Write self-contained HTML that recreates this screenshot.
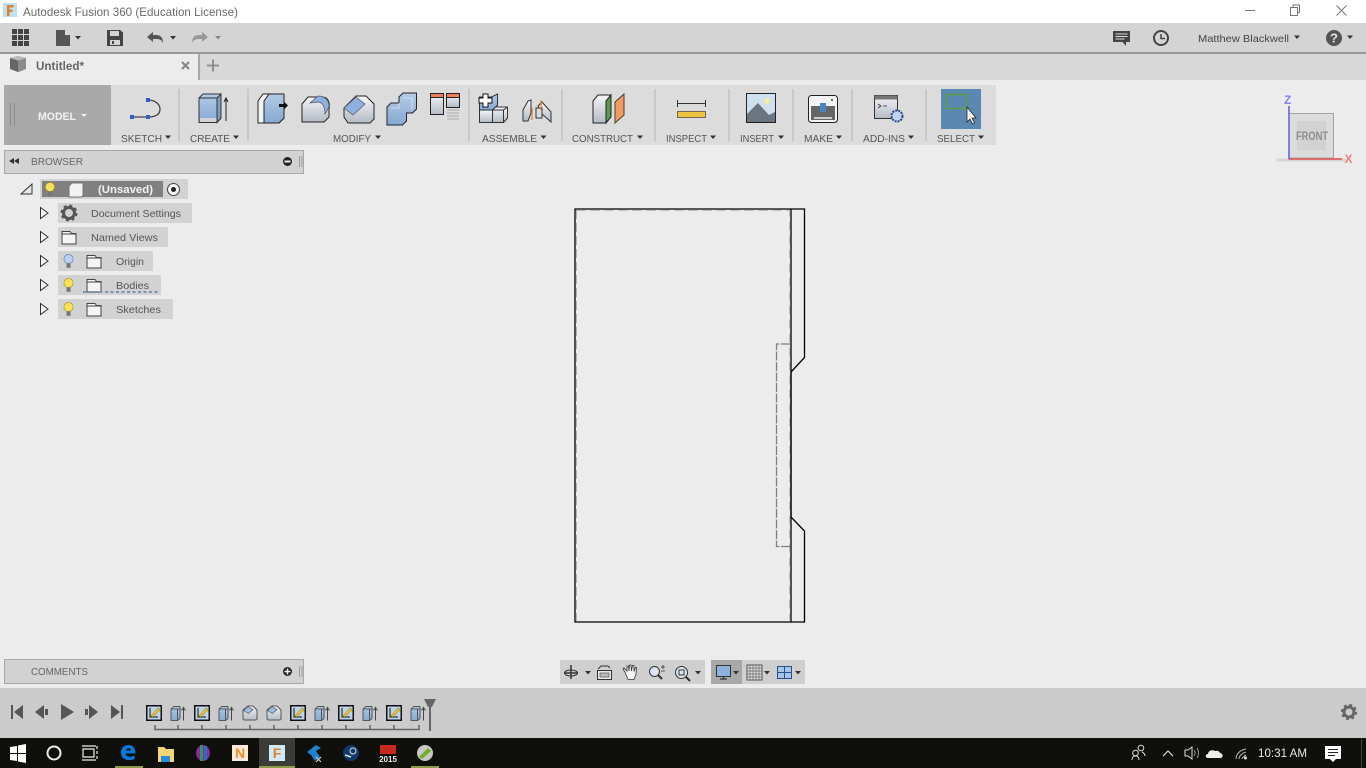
<!DOCTYPE html>
<html><head><meta charset="utf-8"><title>Autodesk Fusion 360</title>
<style>
html,body{margin:0;padding:0;background:#ececec;overflow:hidden}
svg{display:block}
text{font-family:"Liberation Sans",sans-serif}
.r{font-size:10.5px;fill:#555}
.b{font-size:10.5px;fill:#555}
</style></head><body>
<svg width="1366" height="768" viewBox="0 0 1366 768" xmlns="http://www.w3.org/2000/svg">
<defs>
<linearGradient id="blue" x1="0" y1="0" x2="0" y2="1"><stop offset="0" stop-color="#b4cbe6"/><stop offset="1" stop-color="#86a8d2"/></linearGradient>
<linearGradient id="gry" x1="0" y1="0" x2="0" y2="1"><stop offset="0" stop-color="#f4f5f7"/><stop offset="1" stop-color="#b4bbc6"/></linearGradient>
<g id="tri"><path d="M0 0h6l-3 3.500z" fill="#333"/></g>
<g id="tlS"><rect x="0.750" y="0.750" width="14.500" height="14.500" fill="#bcd3ea" stroke="#111" stroke-width="1.500"/><path d="M4 3v9h8" fill="none" stroke="#333" stroke-width="1.200"/><path d="M5 11l7-8 2 1.500-7 7.500z" fill="#f2c81e" stroke="#7a6410" stroke-width=".5"/></g>
<g id="tlE"><path d="M1.500 4l3-2.500h6v12l-2.500 2h-6.500z" fill="url(#blue)" stroke="#555" stroke-width="1"/><path d="M8 4h2.500M8 4v11.500M1.500 4h6.500" fill="none" stroke="#555"/><path d="M14 15.500V3M12 5.500l2-3 2 3" fill="none" stroke="#444" stroke-width="1"/></g>
<g id="tlC"><path d="M1 5l5-4h5l4 4v9l-1 1H2l-1-1z" fill="url(#gry)" stroke="#555" stroke-width="1"/><path d="M1.500 5.500l4.500-4 5 3-4.500 4z" fill="#9dbbe0" stroke="#555" stroke-width=".7"/></g>
<g id="bulb"><circle cx="0" cy="-2" r="4.600" fill="#f6e25a" stroke="#a88f20" stroke-width=".6"/><rect x="-2" y="2.300" width="4" height="4.500" fill="#777"/></g>
<g id="bulbB"><circle cx="0" cy="-2" r="4.600" fill="#bcd0f2" stroke="#6078a8" stroke-width=".6"/><rect x="-2" y="2.300" width="4" height="4.500" fill="#777"/></g>
<g id="fold"><path d="M.500 3V1h8l1.500 2h4.500v10.500H.500z" fill="#f4f4f4" stroke="#444" stroke-width="1"/><path d="M.500 3.500h14" stroke="#444"/></g>
<g id="exp"><path d="M.500 .500L8 6 .500 11.500z" fill="#f2f2f2" stroke="#333" stroke-width="1"/></g>
</defs>

<!-- base -->
<rect width="1366" height="768" fill="#ececec"/>
<rect width="1366" height="23" fill="#fff"/>
<rect y="23" width="1366" height="29" fill="#d4d4d4"/>
<rect y="52" width="1366" height="2.500" fill="#999"/>
<rect y="54" width="1366" height="26" fill="#d8d8d8"/>
<rect y="54" width="198" height="26" fill="#ececec"/>
<rect x="198" y="54" width="2" height="26" fill="#aaa"/>

<!-- title bar -->
<rect x="3" y="3" width="14" height="14" fill="#bfe0f2"/>
<path d="M7 5h6.500v2.500H9.500v2h3V12h-3v4H7z" fill="#e0822c"/>
<text x="23" y="16" font-size="12" fill="#6a6a6a" textLength="215" lengthAdjust="spacingAndGlyphs">Autodesk Fusion 360 (Education License)</text>
<rect x="1245" y="10" width="10" height="1" fill="#777"/>
<path d="M1290.500 7.500h7v8h-7zM1293 7V5h6.500v7.500h-2" fill="none" stroke="#777"/>
<path d="M1336.500 5.500l10 10M1346.500 5.500l-10 10" stroke="#777" stroke-width="1"/>

<!-- top toolbar -->
<g fill="#444"><rect x="12" y="29" width="5" height="5"/><rect x="18" y="29" width="5" height="5"/><rect x="24" y="29" width="5" height="5"/><rect x="12" y="35" width="5" height="5"/><rect x="18" y="35" width="5" height="5"/><rect x="24" y="35" width="5" height="5"/><rect x="12" y="41" width="5" height="5"/><rect x="18" y="41" width="5" height="5"/><rect x="24" y="41" width="5" height="5"/></g>
<path d="M56 30h9l5 5v11H56z" fill="#555"/><path d="M65 30v5h5z" fill="#ddd"/>
<use href="#tri" x="75" y="36"/>
<path d="M107 30h13l3 2.500V46h-16z" fill="#444"/><rect x="110" y="31" width="9" height="5" fill="#d4d4d4"/><rect x="110" y="40" width="10" height="5" fill="#d4d4d4"/><rect x="112" y="41" width="2" height="3" fill="#444"/>
<path d="M147 37l6-5v3h3c5 0 7 3 7 8-1.500-3-3-4-7-4h-3v3z" fill="#555"/>
<use href="#tri" x="170" y="36"/>
<path d="M208 37l-6-5v3h-3c-5 0-7 3-7 8 1.500-3 3-4 7-4h3v3z" fill="#999"/>
<path d="M215 36h6l-3 3.500z" fill="#888"/>

<path d="M1113 31h17v11h-4v4l-3.500-4H1113z" fill="#444"/><path d="M1115.500 34h12M1115.500 36.500h12M1115.500 39h9" stroke="#ddd" stroke-width="1"/>
<circle cx="1161" cy="38" r="7" fill="none" stroke="#444" stroke-width="2"/><path d="M1161 34v4.500h4" fill="none" stroke="#444" stroke-width="1.500"/>
<text x="1198" y="42" font-size="10.500" fill="#444" textLength="91" lengthAdjust="spacingAndGlyphs">Matthew Blackwell</text>
<use href="#tri" x="1294" y="35.500"/>
<circle cx="1334" cy="38" r="8" fill="#555"/><text x="1334" y="42.500" font-size="13" font-weight="bold" fill="#e4e4e4" text-anchor="middle">?</text>
<use href="#tri" x="1347" y="35.500"/>

<!-- tab -->
<path d="M10 58l8-2 8 2v11l-8 3-8-3z" fill="#666"/><path d="M18 60l8-2v11l-8 3z" fill="#8b8b8b"/><path d="M10 58l8-2 8 2-8 2.500z" fill="#bbb"/>
<text x="36" y="70" font-size="12" font-weight="bold" fill="#666" textLength="48" lengthAdjust="spacingAndGlyphs">Untitled*</text>
<path d="M182 62l7 7M189 62l-7 7" stroke="#888" stroke-width="2.200"/>
<path d="M213 59.500v12M207 65.500h12" stroke="#888" stroke-width="1.800"/>

<!-- ribbon -->
<rect x="4" y="85" width="992" height="60" fill="#dcdcdc"/>
<rect x="4" y="85" width="107" height="60" fill="#a9a9a9"/>
<path d="M10.500 103v23M14.500 103v23" stroke="#8d8d8d" stroke-width="1"/>
<text x="38" y="120" font-size="11" font-weight="bold" fill="#f2f2f2" textLength="38" lengthAdjust="spacingAndGlyphs">MODEL</text>
<path d="M81 114h6l-3 3z" fill="#eee"/>
<g fill="#c8c8c8"><rect x="178" y="89" width="2" height="52"/><rect x="247" y="89" width="2" height="52"/><rect x="468" y="89" width="2" height="52"/><rect x="561" y="89" width="2" height="52"/><rect x="654" y="89" width="2" height="52"/><rect x="728" y="89" width="2" height="52"/><rect x="792" y="89" width="2" height="52"/><rect x="851" y="89" width="2" height="52"/><rect x="925" y="89" width="2" height="52"/></g>

<text class="r" x="121" y="142" textLength="41" lengthAdjust="spacingAndGlyphs">SKETCH</text><use href="#tri" x="165" y="135.500"/>
<text class="r" x="190" y="142" textLength="40" lengthAdjust="spacingAndGlyphs">CREATE</text><use href="#tri" x="233" y="135.500"/>
<text class="r" x="333" y="142" textLength="38" lengthAdjust="spacingAndGlyphs">MODIFY</text><use href="#tri" x="375" y="135.500"/>
<text class="r" x="482" y="142" textLength="55" lengthAdjust="spacingAndGlyphs">ASSEMBLE</text><use href="#tri" x="540.500" y="135.500"/>
<text class="r" x="572" y="142" textLength="61" lengthAdjust="spacingAndGlyphs">CONSTRUCT</text><use href="#tri" x="637" y="135.500"/>
<text class="r" x="666" y="142" textLength="41" lengthAdjust="spacingAndGlyphs">INSPECT</text><use href="#tri" x="710" y="135.500"/>
<text class="r" x="740" y="142" textLength="34" lengthAdjust="spacingAndGlyphs">INSERT</text><use href="#tri" x="778" y="135.500"/>
<text class="r" x="804" y="142" textLength="29" lengthAdjust="spacingAndGlyphs">MAKE</text><use href="#tri" x="836" y="135.500"/>
<text class="r" x="863" y="142" textLength="42" lengthAdjust="spacingAndGlyphs">ADD-INS</text><use href="#tri" x="908" y="135.500"/>
<text class="r" x="937" y="142" textLength="38" lengthAdjust="spacingAndGlyphs">SELECT</text><use href="#tri" x="978" y="135.500"/>

<!-- sketch icon -->
<path d="M132 117h16c10 0 12-4 12-8s-4-9-12-9" fill="none" stroke="#444" stroke-width="1.300"/>
<rect x="130" y="115" width="4" height="4" fill="#2c62c4"/><rect x="146" y="115" width="4" height="4" fill="#2c62c4"/><rect x="146" y="98" width="4" height="4" fill="#2c62c4"/>
<!-- create -->
<path d="M199 98l4-4h18v24l-4 4.500h-18z" fill="url(#blue)" stroke="#333" stroke-width="1"/><path d="M217 98l4-4v24l-4 4.500z" fill="#7f9cc2" stroke="#333"/><path d="M199 98h18" fill="none" stroke="#333"/><rect x="200" y="118" width="16.500" height="4" fill="#d0d3d8"/><path d="M226 121V98M224 102l2-4 2 4" fill="none" stroke="#222" stroke-width="1"/>
<!-- press pull -->
<path d="M258 101l5-7h21v24l-5 5h-21z" fill="#f2f2f2" stroke="#222"/><path d="M264 101l5-7h15v24l-5 5h-15z" fill="url(#blue)" stroke="#222"/><path d="M279 104h5v-2.500l4 4-4 4V107h-5z" fill="#111"/>
<!-- fillet -->
<path d="M302 104l6-7h14c6 0 8 5 7 12v8l-5 5h-22z" fill="url(#gry)" stroke="#222"/><path d="M318 96c6 0 11 3 11 11l-4 7c0-8-3-12-7-12l-8 1z" fill="#8db0dc" stroke="#556" stroke-width=".7"/>
<!-- chamfer -->
<path d="M344 108l12-12h10l8 8v15l-4 4h-22l-4-6z" fill="url(#gry)" stroke="#222"/><path d="M344 108l12-11 9 7-12 11z" fill="#8db0dc" stroke="#556" stroke-width=".7"/>
<!-- combine -->
<path d="M387 107l4-4h8v-6l4-4h13.500v16l-4 4h-6v8l-4 4H387z" fill="url(#blue)" stroke="#223" stroke-width="1"/><path d="M391 108h8v-5M403 98h9v12" fill="none" stroke="#dfe8f4" stroke-width=".8"/>
<!-- replace face -->
<rect x="430.500" y="93.500" width="13" height="21" fill="url(#gry)" stroke="#222"/><rect x="430.500" y="93.500" width="13" height="4" fill="#ef7d5a" stroke="#222"/>
<rect x="446.500" y="93.500" width="13" height="14" fill="url(#gry)" stroke="#222"/><rect x="446.500" y="93.500" width="13" height="4" fill="#ef7d5a" stroke="#222"/><path d="M447 110h12M447 113h12M447 116h12M447 119h12" stroke="#aaa"/>
<!-- assemble -->
<path d="M479.500 110h13v12.500h-13z" fill="url(#gry)" stroke="#333"/>
<path d="M492.500 107h9l6 -0v11l-4 4.500h-11z" fill="url(#gry)" stroke="#333"/><path d="M492.500 110h11l4-3M503.500 110v12" fill="none" stroke="#333"/>
<path d="M479.500 110V97h12l6-3v11l-5 5z" fill="url(#blue)" stroke="#234"/>
<path d="M483 94h5v4h4v5h-4v4h-5v-4h-4v-5h4z" fill="#fff" stroke="#111"/>
<path d="M523 110l5-9 3-1v13l-3 8-5 0z" fill="url(#gry)" stroke="#333"/><path d="M538 106l4-4 9 10v10l-9-8z" fill="url(#gry)" stroke="#333"/><rect x="536" y="108" width="6" height="10" fill="#ddd" stroke="#333"/><path d="M532 108v12M541 100v10" stroke="#ef7a1c" stroke-width="1.200"/>
<!-- construct -->
<path d="M593 101l5-6h12v22l-4 6h-13z" fill="url(#gry)" stroke="#222"/><path d="M606 101l5-6v22l-5 6z" fill="#5a9a50" stroke="#222"/>
<path d="M615 102l9-8v21l-9 8z" fill="#ee9a60" stroke="#443"/>
<!-- inspect -->
<path d="M677.500 100v7M705.500 100v7M677.500 103.500h28" stroke="#333" stroke-width="1"/>
<rect x="677.500" y="111.500" width="28" height="6" fill="#edc340" stroke="#765" stroke-width="1"/>
<!-- insert -->
<rect x="746.500" y="93.500" width="29" height="29" fill="#cfe0ee" stroke="#222"/><circle cx="767" cy="101" r="3" fill="#f6eca0"/><path d="M747 122v-8l11-11 11 12 6-3v10z" fill="#6b7580"/>
<!-- make -->
<rect x="808.500" y="95.500" width="29" height="27" rx="3" fill="#f4f4f4" stroke="#222"/><rect x="811" y="106" width="24" height="14" fill="#666"/><rect x="820" y="103" width="6" height="9" fill="#4a84c4"/><rect x="831" y="99" width="2" height="2" fill="#3a8a3a"/><path d="M814 118h18" stroke="#ccc" stroke-width="2"/>
<!-- add-ins -->
<rect x="874.500" y="95.500" width="23" height="23" fill="url(#gry)" stroke="#333"/><rect x="874.500" y="95.500" width="23" height="4" fill="#777"/><path d="M878 104l3 2-3 2M883 106h4" fill="none" stroke="#333" stroke-width=".8"/><circle cx="897" cy="116" r="5.500" fill="#c0d4ec" stroke="#2a4a88" stroke-width="2" stroke-dasharray="2 1"/>
<!-- select -->
<rect x="941" y="89" width="40" height="40" fill="#5b88b0"/><rect x="946.500" y="94.500" width="20" height="14" fill="none" stroke="#5aa040" stroke-width="1.500"/>
<path d="M967 107v15l3-3 2.500 5 2-1-2.500-5h4z" fill="#fff" stroke="#222" stroke-width=".8"/>

<!-- browser -->
<rect x="4.500" y="150.500" width="299" height="23" fill="#d2d2d2" stroke="#a8a8a8"/>
<path d="M9 161l5-3v6zM14 161l5-3v6z" fill="#333"/>
<text x="31" y="165" font-size="10.500" fill="#666" textLength="52" lengthAdjust="spacingAndGlyphs">BROWSER</text>
<circle cx="287.500" cy="161.500" r="4.500" fill="#222"/><rect x="284.500" y="160.500" width="6" height="2" fill="#eee"/>
<path d="M299.500 156v11M302 156v11" stroke="#999"/>

<path d="M21 194l11-10v10z" fill="#e6e6e6" stroke="#333"/>
<rect x="40" y="179" width="148" height="20" fill="#d2d2d2"/><rect x="42" y="181" width="121" height="16" fill="#808080"/>
<use href="#bulb" x="50" y="189"/>
<path d="M69 186l3-3h11v13l-2 1H69z" fill="#f2f2f2" stroke="#777"/>
<text x="98" y="193" font-size="11" font-weight="bold" fill="#f2f2f2" textLength="55" lengthAdjust="spacingAndGlyphs">(Unsaved)</text>
<circle cx="173.500" cy="189.500" r="6" fill="#f6f6f6" stroke="#444"/><circle cx="173.500" cy="189.500" r="2.500" fill="#222"/>

<rect x="58" y="203" width="134" height="20" fill="#d2d2d2"/>
<rect x="58" y="227" width="110" height="20" fill="#d2d2d2"/>
<rect x="58" y="251" width="95" height="20" fill="#d2d2d2"/>
<rect x="58" y="275" width="103" height="20" fill="#d2d2d2"/>
<rect x="58" y="299" width="115" height="20" fill="#d2d2d2"/>
<use href="#exp" x="40" y="207"/><use href="#exp" x="40" y="231"/><use href="#exp" x="40" y="255"/><use href="#exp" x="40" y="279"/><use href="#exp" x="40" y="303"/>
<circle cx="69" cy="213" r="5.500" fill="none" stroke="#555" stroke-width="3"/><circle cx="69" cy="213" r="7.500" fill="none" stroke="#555" stroke-width="2" stroke-dasharray="3 2.900"/>
<text class="b" x="91" y="217" textLength="90" lengthAdjust="spacingAndGlyphs">Document Settings</text>
<use href="#fold" x="61.500" y="230.500"/><text class="b" x="91" y="241" textLength="67" lengthAdjust="spacingAndGlyphs">Named Views</text>
<use href="#bulbB" x="68.500" y="261"/><use href="#fold" x="86.500" y="254.500"/><text class="b" x="116" y="265" textLength="28" lengthAdjust="spacingAndGlyphs">Origin</text>
<use href="#bulb" x="68.500" y="285"/><use href="#fold" x="86.500" y="278.500"/><text class="b" x="116" y="289" textLength="33" lengthAdjust="spacingAndGlyphs">Bodies</text>
<path d="M83 292h76" stroke="#7c93b8" stroke-width="2" stroke-dasharray="3 2.500"/>
<use href="#bulb" x="68.500" y="309"/><use href="#fold" x="86.500" y="302.500"/><text class="b" x="116" y="313" textLength="45" lengthAdjust="spacingAndGlyphs">Sketches</text>

<!-- comments -->
<rect x="4.500" y="659.500" width="299" height="24" fill="#d2d2d2" stroke="#a8a8a8"/>
<text x="31" y="675" font-size="10.500" fill="#666" textLength="57" lengthAdjust="spacingAndGlyphs">COMMENTS</text>
<circle cx="287.500" cy="671.500" r="4.500" fill="#222"/><path d="M284.500 671.500h6M287.500 668.500v6" stroke="#eee" stroke-width="1.500"/>
<path d="M299.500 666v11M302 666v11" stroke="#999"/>

<!-- drawing -->
<g fill="none">
<path d="M576.500 210.500H789.500V620" stroke="#bdbdbd" stroke-width="1" stroke-dasharray="9 5"/>
<path d="M576.500 210v411" stroke="#b0b0b0" stroke-width="1" stroke-dasharray="9 4"/>
<path d="M575 209H804.500V357.500L791 372V517L804.500 531V622H575z" stroke="#000" stroke-width="1.300"/>
<path d="M791 209V622" stroke="#000" stroke-width="1.300"/>
<path d="M790 344H776.500V546.500H790" stroke="#808080" stroke-width="1.300" stroke-dasharray="9 1.500"/>
</g>

<!-- nav bar -->
<rect x="560" y="660" width="145" height="24" fill="#cfcfcf"/>
<rect x="711" y="660" width="94" height="24" fill="#cfcfcf"/>
<rect x="711" y="660" width="31" height="24" fill="#a8a8a8"/>
<path d="M571 665v14M564 673h14" stroke="#333" stroke-width="1.500"/><ellipse cx="571" cy="673" rx="6.500" ry="3" fill="none" stroke="#333"/>
<path d="M585 671h6l-3 3.500z" fill="#333"/>
<rect x="597.500" y="670.500" width="14" height="9" fill="#e8e8e8" stroke="#333"/><rect x="600" y="673" width="9" height="4" fill="#bbb" stroke="#444" stroke-width=".6"/><path d="M598 669l3-3h7l2 2" fill="none" stroke="#333"/>
<path d="M625 672l-2-3 1-1 3 3v-5h1.500l.5 5 .5-6h1.500l.5 6 1-5.500h1.500v6l1.500-4h1l-.5 7-2 5h-6z" fill="#f4f4f4" stroke="#333" stroke-width=".8"/>
<circle cx="654.500" cy="671.500" r="5" fill="#dbe6f2" stroke="#333"/><path d="M658 675l4 4" stroke="#333" stroke-width="2"/><path d="M661 667h4M663 665v4M661 671h4" stroke="#333" stroke-width=".8"/>
<circle cx="681.500" cy="672.500" r="6" fill="#dbe6f2" stroke="#333"/><rect x="679" y="670" width="5" height="5" fill="none" stroke="#333"/><path d="M686 677l4 4" stroke="#333" stroke-width="2"/>
<path d="M695 671h6l-3 3.500z" fill="#333"/>
<rect x="716.500" y="665.500" width="14" height="11" fill="#8fb2dc" stroke="#333"/><path d="M720 679h7M723.500 677v2" stroke="#333" stroke-width="1.300"/>
<path d="M733 671h6l-3 3.500z" fill="#333"/>
<rect x="747" y="665" width="15" height="15" fill="#ddd" stroke="#555"/><path d="M750 665v15M753 665v15M756 665v15M759 665v15M747 668h15M747 671h15M747 674h15M747 677h15" stroke="#666" stroke-width=".7"/>
<path d="M764 671h6l-3 3.500z" fill="#333"/>
<rect x="777.500" y="666.500" width="14" height="12" fill="#a8c4e4" stroke="#24508c"/><path d="M784.500 667v11M778 672.500h13" stroke="#24508c"/>
<path d="M795 671h6l-3 3.500z" fill="#333"/>

<!-- view cube -->
<rect x="1289" y="113.500" width="44.500" height="44.500" fill="#dcdcdc" stroke="#a4a4a4"/>
<rect x="1297" y="121" width="29" height="29" fill="#d2d2d2"/>
<text x="1296" y="140" font-size="11.500" font-weight="bold" fill="#8e8e8e" textLength="32" lengthAdjust="spacingAndGlyphs">FRONT</text>
<path d="M1276 160h70" stroke="#ccc" stroke-width="3" opacity=".7"/>
<path d="M1289 106v53.500" stroke="#5c5ce0" stroke-width="1.500"/>
<path d="M1289 159h53" stroke="#e06060" stroke-width="1.800"/>
<text x="1284" y="104" font-size="12" font-weight="bold" fill="#7f7ff0">Z</text>
<text x="1344.500" y="163" font-size="12" font-weight="bold" fill="#f08080">X</text>

<!-- timeline -->
<rect y="688" width="1366" height="50" fill="#cbcbcb"/>
<g fill="#555">
<rect x="11" y="705" width="2" height="14"/><path d="M23 705v14l-9-7z"/>
<path d="M44 705v14l-9-7z"/><rect x="45" y="709" width="3" height="6"/>
<path d="M61 704v16l13-8z"/>
<rect x="85" y="709" width="3" height="6"/><path d="M89 705v14l9-7z"/>
<path d="M111 705v14l9-7z"/><rect x="121" y="705" width="2" height="14"/>
</g>
<use href="#tlS" x="146" y="705"/><use href="#tlE" x="169.500" y="705"/>
<use href="#tlS" x="194" y="705"/><use href="#tlE" x="217.500" y="705"/>
<use href="#tlC" x="242" y="705"/><use href="#tlC" x="266" y="705"/>
<use href="#tlS" x="290" y="705"/><use href="#tlE" x="313.500" y="705"/>
<use href="#tlS" x="338" y="705"/><use href="#tlE" x="361.500" y="705"/>
<use href="#tlS" x="386" y="705"/><use href="#tlE" x="409.500" y="705"/>
<path d="M155 725v4.500H419V725M178 725v4M202 725v4M226 725v4M250 725v4M274 725v4M298 725v4M322 725v4M346 725v4M370 725v4M394 725v4" fill="none" stroke="#666" stroke-width="1.500"/>
<path d="M424 699h12l-4 8h-4z" fill="#666"/><rect x="429" y="705" width="2" height="26" fill="#666"/>
<circle cx="1349" cy="712" r="5" fill="none" stroke="#666" stroke-width="3"/><circle cx="1349" cy="712" r="7" fill="none" stroke="#666" stroke-width="2.200" stroke-dasharray="2.800 2.700"/>

<!-- taskbar -->
<rect y="738" width="1366" height="30" fill="#0f0f0c"/>
<rect x="259" y="738" width="36" height="30" fill="#3c3b36"/>
<g fill="#8a9c48"><rect x="115" y="766" width="28" height="2"/><rect x="259" y="766" width="36" height="2"/><rect x="411" y="766" width="28" height="2"/></g>
<path d="M10 747l7-1v7h-7zM18 745.500l8-1.500v9h-8zM10 754h7v7l-7-1zM18 754h8v9l-8-1.500z" fill="#fff"/>
<circle cx="54" cy="753" r="6.500" fill="none" stroke="#eee" stroke-width="2"/>
<path d="M83 749h11v8H83zM82 746h14M82 760h14M97 746v3M97 751v3M97 756v3" fill="none" stroke="#eee" stroke-width="1.200"/>
<path d="M121 753c0-5 3-8 7.500-8s7 3.500 7 8.500h-10c.5 3.500 5 4 9 2v3.500c-6 2.500-13.500 1-13.500-6.500zM126 750.500h5c0-3-4.500-3-5 0z" fill="#0a78d8" fill-rule="evenodd"/>
<path d="M158 747h6l2 2h8v13h-16z" fill="#f4d677"/><rect x="161" y="756" width="9" height="6" fill="#2a8bd8"/>
<ellipse cx="203" cy="753" rx="7" ry="8" fill="#8c2a9c"/><rect x="200" y="745" width="3" height="16" fill="#2c9c5c"/><rect x="204" y="746" width="3" height="14" fill="#2a6cc8"/>
<rect x="232" y="745" width="16" height="16" fill="#fbe8d8"/><text x="240" y="758" font-size="14" font-weight="bold" fill="#e8912c" text-anchor="middle">N</text>
<rect x="269" y="745" width="16" height="16" fill="#cfeaf6"/><text x="277" y="758" font-size="14" font-weight="bold" fill="#e0822c" text-anchor="middle">F</text>
<path d="M307 752l9-7 5 3-5 3 4 6-5 4-4-6z" fill="#1f7fd0"/><path d="M316 757l5 5M321 757l-5 5" stroke="#ddd"/>
<circle cx="351" cy="753" r="8" fill="#123a68"/><circle cx="353" cy="751" r="3" fill="none" stroke="#ddd"/><path d="M345 755l6 2" stroke="#ddd" stroke-width="1.500"/>
<rect x="380" y="745" width="16" height="9" fill="#c8281e"/><text x="388" y="762" font-size="8" font-weight="bold" fill="#eee" text-anchor="middle">2015</text>
<circle cx="425" cy="753" r="8" fill="#c8c8c0"/><path d="M419 757l9-9 3 3-9 8z" fill="#6cae2c"/>

<!-- tray -->
<circle cx="1141" cy="748" r="2.800" fill="none" stroke="#ddd"/><path d="M1145 756c0-2-1-3-3-4" fill="none" stroke="#ddd"/><circle cx="1135.500" cy="753" r="2.800" fill="none" stroke="#ddd"/><path d="M1132 760c0-3 1-4 3.500-4s3.500 1 3.500 4" fill="none" stroke="#ddd"/>
<path d="M1163 756l5-5 5 5" fill="none" stroke="#ddd" stroke-width="1.200"/>
<path d="M1185 750h3l4-3v12l-4-3h-3z" fill="none" stroke="#ddd"/><path d="M1194 750c1.500 2 1.500 4 0 6M1197 748c2 3 2 7 0 10" fill="none" stroke="#999"/>
<path d="M1208 758c-3 0-3-4 0-4 0-3 4-5 7-3 3-1 5 1 5 2 3 0 4 5 0 5z" fill="#eee"/>
<path d="M1236 759c0-5 4-9 10-10M1239 759c0-3 3-6 7-7M1242 759c0-1 2-3 4-4" fill="none" stroke="#bbb"/><circle cx="1245.500" cy="758" r="1.500" fill="#ddd"/>
<text x="1258" y="757" font-size="12" fill="#e8e8e8" textLength="49" lengthAdjust="spacingAndGlyphs">10:31 AM</text>
<path d="M1325 746h16v13h-5l-3 3-3-3h-5z" fill="#fff"/><path d="M1328 749.500h10M1328 752.500h10M1328 755.500h7" stroke="#222" stroke-width="1"/>
<rect x="1361" y="738" width="1" height="30" fill="#444"/>
</svg>
</body></html>
